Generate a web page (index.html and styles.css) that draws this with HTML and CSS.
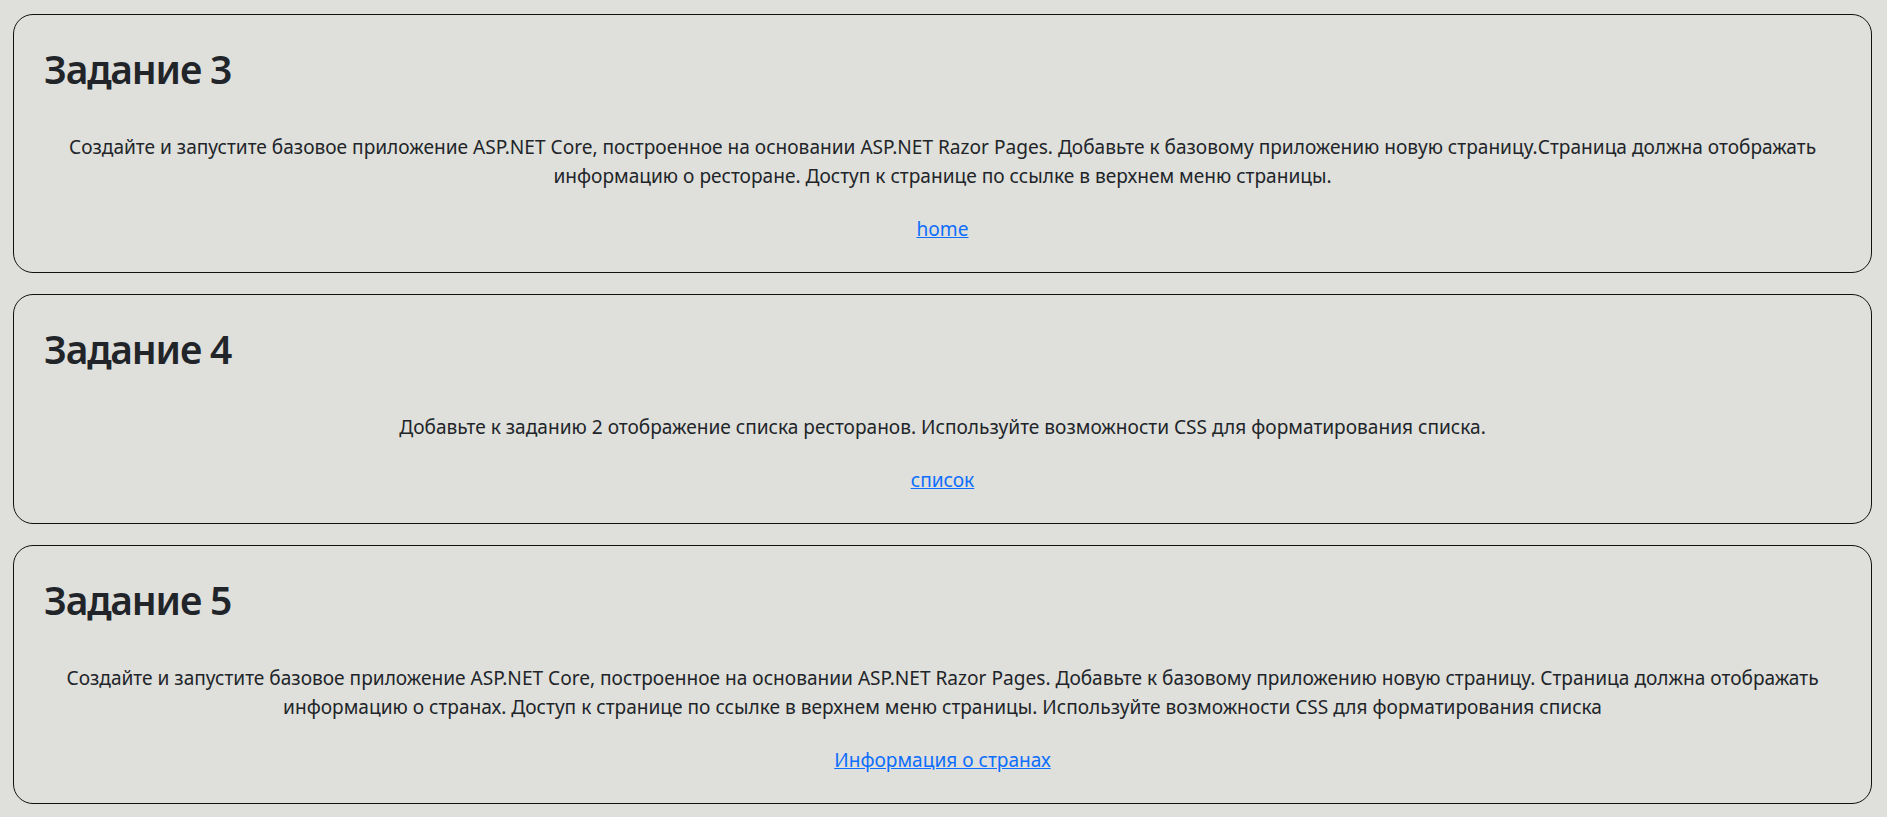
FILE: index.html
```html
<!DOCTYPE html>
<html lang="ru">
<head>
<meta charset="utf-8">
<title>Задания</title>
<link rel="stylesheet" href="styles.css">
</head>
<body>
<main class="tasks">
  <section class="task">
    <h1 class="task-title">Задание 3</h1>
    <p class="task-text">Создайте и запустите базовое приложение ASP.NET Core, построенное на основании ASP.NET Razor Pages. Добавьте к базовому приложению новую страницу.Страница должна отображать информацию о ресторане. Доступ к странице по ссылке в верхнем меню страницы.</p>
    <p class="task-link"><a href="#">home</a></p>
  </section>
  <section class="task">
    <h1 class="task-title">Задание 4</h1>
    <p class="task-text">Добавьте к заданию 2 отображение списка ресторанов. Используйте возможности CSS для форматирования списка.</p>
    <p class="task-link"><a href="#">список</a></p>
  </section>
  <section class="task">
    <h1 class="task-title">Задание 5</h1>
    <p class="task-text">Создайте и запустите базовое приложение ASP.NET Core, построенное на основании ASP.NET Razor Pages. Добавьте к базовому приложению новую страницу. Страница должна отображать информацию о странах. Доступ к странице по ссылке в верхнем меню страницы. Используйте возможности CSS для форматирования списка</p>
    <p class="task-link"><a href="#">Информация о странах</a></p>
  </section>
</main>
</body>
</html>
```
FILE: styles.css
```css
html, body {
  margin: 0;
  background: #dfdfdb;
}
body {
  font-family: "Noto Sans", "Open Sans", sans-serif;
  color: #212529;
  padding: 14px 15px 14px 13px;
}
.tasks {
  display: flex;
  flex-direction: column;
  gap: 21px;
}
.task {
  border: 1px solid #111;
  border-radius: 20px;
  padding: 30px 30px 28px;
}
.task-title {
  margin: 0 0 40px;
  font-size: 39px;
  line-height: 48px;
  font-weight: 600;
  letter-spacing: -1.2px;
}
.task-text {
  margin: 0;
  font-size: 19.1px;
  line-height: 28.8px;
  text-align: center;
}
.task-link {
  margin: 24.6px 0 0;
  font-size: 19.1px;
  line-height: 28.8px;
  text-align: center;
}
.task-link a {
  color: #0d6efd;
  text-decoration: underline;
}
```
